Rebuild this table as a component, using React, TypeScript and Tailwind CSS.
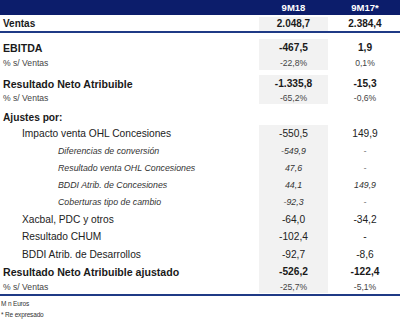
const rows: {
  label: string;
  a: string;
  b: string;
  kind: "bold" | "pct" | "normal" | "sub" | "title";
  h: string;
  mt?: string;
  gray?: boolean;
}[] = [
  { label: "EBITDA", a: "-467,5", b: "1,9", kind: "bold", h: "h-[18px]", mt: "mt-[6px]" },
  { label: "% s/ Ventas", a: "-22,8%", b: "0,1%", kind: "pct", h: "h-[13px]" },
  { label: "Resultado Neto Atribuible", a: "-1.335,8", b: "-15,3", kind: "bold", h: "h-[18px]", mt: "mt-[5px]" },
  { label: "% s/ Ventas", a: "-65,2%", b: "-0,6%", kind: "pct", h: "h-[11px]" },
  { label: "Ajustes por:", a: "", b: "", kind: "title", h: "h-[13px]", mt: "mt-[8px]", gray: false },
  { label: "Impacto venta OHL Concesiones", a: "-550,5", b: "149,9", kind: "normal", h: "h-[18px]" },
  { label: "Diferencias de conversión", a: "-549,9", b: "-", kind: "sub", h: "h-[17px]" },
  { label: "Resultado venta OHL Concesiones", a: "47,6", b: "-", kind: "sub", h: "h-[17px]" },
  { label: "BDDI Atrib. de Concesiones", a: "44,1", b: "149,9", kind: "sub", h: "h-[17px]" },
  { label: "Coberturas tipo de cambio", a: "-92,3", b: "-", kind: "sub", h: "h-[17px]" },
  { label: "Xacbal, PDC y otros", a: "-64,0", b: "-34,2", kind: "normal", h: "h-[18px]" },
  { label: "Resultado CHUM", a: "-102,4", b: "-", kind: "normal", h: "h-[17px]" },
  { label: "BDDI Atrib. de Desarrollos", a: "-92,7", b: "-8,6", kind: "normal", h: "h-[18px]" },
  { label: "Resultado Neto Atribuible ajustado", a: "-526,2", b: "-122,4", kind: "bold", h: "h-[17px]" },
  { label: "% s/ Ventas", a: "-25,7%", b: "-5,1%", kind: "pct", h: "h-[12px]" },
];

const labelCls = {
  bold: "pl-[3px] text-[10.6px] font-bold text-[#1a1a1a]",
  pct: "pl-[3px] text-[8.6px] text-[#444]",
  normal: "pl-[22px] text-[10.2px] text-[#222]",
  sub: "pl-[58px] text-[8.8px] italic text-[#333]",
  title: "pl-[3px] text-[10.2px] font-bold text-[#1a1a1a]",
};

const valueCls = {
  bold: "text-[10.2px] font-bold text-[#1a1a1a]",
  pct: "text-[8.6px] text-[#444]",
  normal: "text-[10.2px] text-[#222]",
  sub: "text-[8.8px] italic text-[#333]",
  title: "",
};

export default function App() {
  return (
    <div className="w-[400px] h-[319px] bg-white overflow-hidden font-['Liberation_Sans',Arial,sans-serif] leading-none">
      <div className="flex h-[15px] bg-[#0c1d6b] text-[9.5px] font-bold text-white">
        <div className="flex-1" />
        <div className="flex w-[69px] items-center justify-center">9M18</div>
        <div className="w-[2px]" />
        <div className="flex w-[70px] items-center justify-center">9M17*</div>
      </div>

      <div className="mt-[2px] flex h-[16px] border-b-2 border-[#1f3a86] text-[10px] font-bold text-[#1a1a1a]">
        <div className="flex flex-1 items-center pl-[3px]">Ventas</div>
        <div className="flex w-[69px] items-center justify-center bg-[#f2f2f2]">2.048,7</div>
        <div className="w-[2px]" />
        <div className="flex w-[70px] items-center justify-center">2.384,4</div>
      </div>

      {rows.map((r, i) => (
        <div key={i} className={`flex ${r.h} ${r.mt ?? ""}`}>
          <div className={`flex flex-1 items-center whitespace-nowrap ${labelCls[r.kind]}`}>{r.label}</div>
          <div
            className={`flex w-[69px] items-center justify-center ${r.gray === false ? "" : "bg-[#f2f2f2]"} ${valueCls[r.kind]}`}
          >
            {r.a}
          </div>
          <div className="w-[2px]" />
          <div className={`flex w-[70px] items-center justify-center ${valueCls[r.kind]}`}>{r.b}</div>
        </div>
      ))}

      <div className="mt-[1px] h-[2px] bg-[#1f3a86]" />
      <div className="pl-[1px] pt-[2px] text-[6.5px] leading-[11px] tracking-tight text-[#333]">
        <div>M n Euros</div>
        <div>* Re expresado</div>
      </div>
    </div>
  );
}
